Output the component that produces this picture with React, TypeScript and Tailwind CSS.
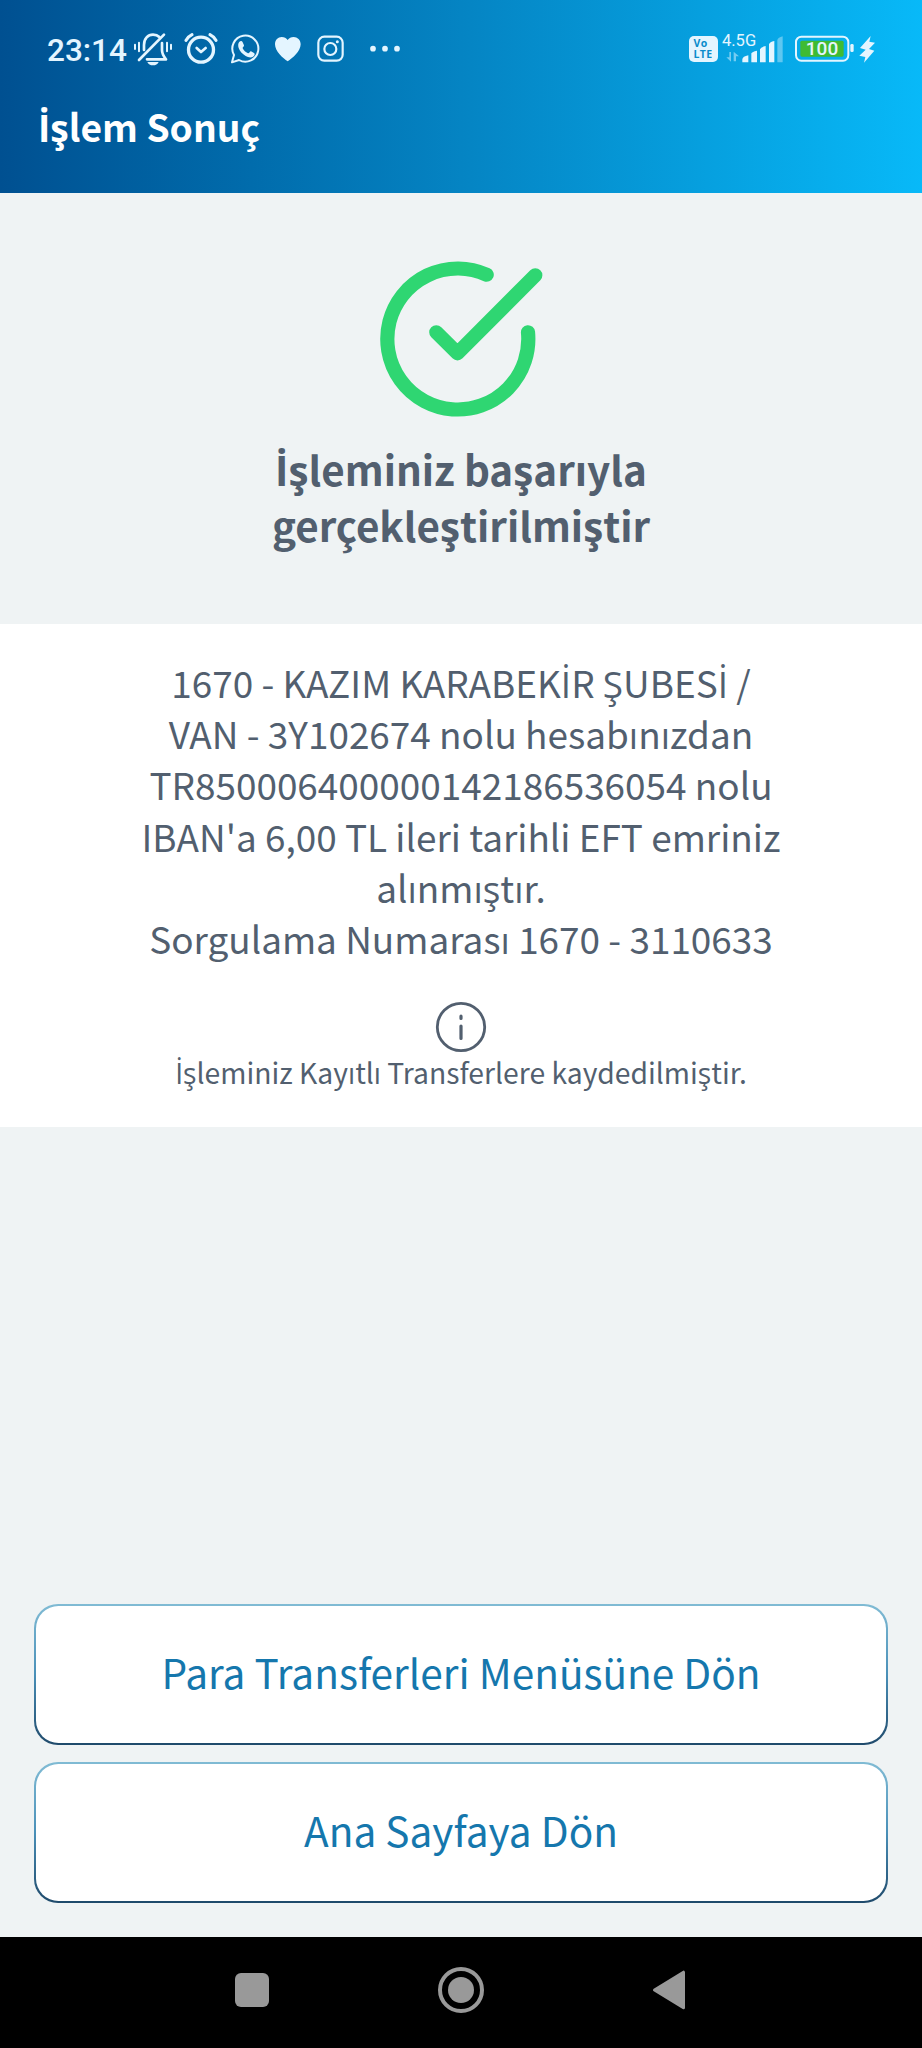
import type { ReactNode } from "react";

const INK = "#e4f5ff";

/** The main face has no dotted capital I, so that letter is set in Open Sans. */
function Tr({ children }: { children: string }) {
  const parts = children.split("İ");
  return (
    <>
      {parts.map((part, i) => (
        <span key={i}>
          {i > 0 && <span className="font-['Open_Sans'] leading-none">İ</span>}
          {part}
        </span>
      ))}
    </>
  );
}

function StatusIcon({ x, w, children }: { x: number; w: number; children: ReactNode }) {
  return (
    <svg
      className="shrink-0"
      width={w / 3}
      height={40}
      viewBox={`${x} 90 ${w} 120`}
      fill="none"
      stroke={INK}
      strokeLinecap="round"
      strokeLinejoin="round"
    >
      {children}
    </svg>
  );
}

function NotificationIcons() {
  return (
    <>
      <StatusIcon x={396} w={132}>
        <path strokeWidth="8" d="M492 104 417 180" />
        <path strokeWidth="8" d="M432 150v-15c0-19 12-31 27-31 8 0 14 2 19 7" />
        <path strokeWidth="8" d="M486 129v22c0 12 5 18 12 27h-57" />
        <path fill={INK} stroke="none" d="M442 186h34c-3 7-9 10-17 10s-14-3-17-10z" />
        <path strokeWidth="6" d="M405 134v13M417 128v26M501 128v26M513 134v13" />
      </StatusIcon>
      <StatusIcon x={528} w={156}>
        <circle cx="603" cy="149" r="37.500" strokeWidth="10" />
        <path strokeWidth="8" d="m590 144 13 12 14-12" />
        <path strokeWidth="9.500" d="M558 121c4-8 10-13 18-17M630 104c8 4 14 9 18 17" />
      </StatusIcon>
      <StatusIcon x={684} w={117}>
        <path strokeWidth="6" d="M696 187l6-22a39 39 0 1 1 15 15z" />
        <path
          fill={INK}
          stroke="none"
          d="M717 127c4-5 9-5 11 0l4 9c1 4-5 6-4 9 3 7 9 12 16 15 4 1 6-7 9-6l9 5c4 2 2 8-3 11-6 4-15 2-22-2-10-6-18-15-21-24-2-6-2-13 1-17z"
        />
      </StatusIcon>
      <StatusIcon x={801} w={126}>
        <path
          fill={INK}
          stroke="none"
          d="M863 184c-14-9-38-30-38-51 0-13 9-22 20-22 8 0 14 3 18 9 4-6 10-9 18-9 11 0 21 9 21 22 0 21-25 42-39 51z"
        />
      </StatusIcon>
      <StatusIcon x={927} w={129}>
        <rect x="955" y="110" width="73" height="72" rx="18" strokeWidth="6.500" />
        <circle cx="991" cy="147" r="18" strokeWidth="6.500" />
        <circle cx="1012" cy="125" r="4.500" fill={INK} stroke="none" />
      </StatusIcon>
      <StatusIcon x={1056} w={162}>
        <g fill={INK} stroke="none">
          <circle cx="1119" cy="146" r="8.500" />
          <circle cx="1155" cy="146" r="8.500" />
          <circle cx="1191" cy="146" r="8.500" />
        </g>
      </StatusIcon>
    </>
  );
}

function Signal() {
  return (
    <div className="relative ml-1 h-10 w-[66px]">
      <span className="absolute top-[2px] left-0 font-['Roboto'] text-[16.5px] leading-[18px] text-[#e4f5ff]">
        4.5G
      </span>
      <svg width="66" height="40" viewBox="156 60 198 120" fill={INK}>
        <g opacity="0.5">
          <path d="M178 126h5v29l-14-13h9zM191 154v-29l16 14h-9v15z" />
        </g>
        <path d="M217 157v-9q1-9 18-12v21zM244 157v-27q2-5 17-8v35zM270 157v-39q2-7 17-10v49zM297 157v-54q2-7 16-10v64z" />
        <path opacity="0.4" d="M322 157V90q2-7 16-11v78z" />
      </svg>
    </div>
  );
}

function Battery() {
  return (
    <div className="relative ml-[6px] h-10 w-[60px]">
      <svg width="60" height="40" viewBox="372 60 180 120" fill="none">
        <rect x="378" y="80" width="157" height="72" rx="16" stroke={INK} strokeWidth="6" />
        <rect x="391" y="92" width="130" height="48" rx="5" fill="#3fbb33" />
        <rect x="541" y="102" width="10" height="24" rx="4" fill={INK} />
      </svg>
      <span className="absolute top-[9px] left-0 w-[56px] text-center font-['Roboto'] text-[19px] leading-[20px] font-medium text-[#e4f5ff]">
        100
      </span>
    </div>
  );
}

function StatusBar() {
  return (
    <div className="flex h-10 items-start">
      <div className="w-[86px] shrink-0 pt-[3px] pl-px font-['Roboto'] text-[31.500px] leading-[35px] font-medium text-[#e4f5ff]">
        23:14
      </div>
      <NotificationIcons />
      <div className="mt-[6px] ml-[283px] h-[26px] w-[29px] shrink-0 rounded-[5px] bg-[#e4f5ff] pt-[2px] pl-[4.5px] font-['Open_Sans'] text-[10.500px] leading-[11px] font-bold tracking-[0.4px] text-[#0a8ccb]">
        Vo
        <br />
        LTE
      </div>
      <Signal />
      <Battery />
      <svg className="ml-[4px]" width="20" height="40" viewBox="564 60 60 120" fill={INK}>
        <path d="m602 78-32 36 17 5-19 18 18 4-4 17 31-36-16-5 18-19-17-3z" />
      </svg>
    </div>
  );
}

function Header() {
  return (
    <header className="h-[193px] bg-linear-to-r from-[#005091] via-[#0584c3] to-[#08b9f8] pt-[30px] pl-[46px]">
      <StatusBar />
      <h1 className="-ml-[8px] pt-[32px] text-[37.200px] leading-[48px] font-bold text-white">
        <Tr>İşlem Sonuç</Tr>
      </h1>
    </header>
  );
}

function ActionButton({ children }: { children: string }) {
  return (
    <div className="h-[141px] rounded-[24px] bg-linear-to-b from-[#80bbd4] via-[#4a90b8] to-[#1f4a6b] p-[2px]">
      <button className="flex h-full w-full items-center justify-center rounded-[22.500px] bg-white pb-[5px] text-[40.550px] leading-[58px] text-[#1577ad]">
        {children}
      </button>
    </div>
  );
}

const DETAILS = [
  "1670 - KAZIM KARABEKİR ŞUBESİ /",
  "VAN - 3Y102674 nolu hesabınızdan",
  "TR850006400000142186536054 nolu",
  "IBAN'a 6,00 TL ileri tarihli EFT emriniz",
  "alınmıştır.",
  "Sorgulama Numarası 1670 - 3110633",
];

export default function App() {
  return (
    <div className="flex h-[2048px] w-[922px] flex-col bg-[#eff3f4] font-['Noto_Sans_CJK_SC','Open_Sans',sans-serif] text-[#525f6f]">
      <Header />

      <section className="flex h-[431px] flex-col items-center pt-[62px]">
        <svg width="180" height="170" viewBox="371 255 180 170" fill="none" stroke="#2fd672" strokeWidth="14.200" strokeLinecap="round" strokeLinejoin="round">
          <path d="M486.700 274.700A70.500 70.500 0 1 0 528 332.300" />
          <path d="m436.300 332.300 21.200 21 77.800-78" />
        </svg>
        <h2 className="mt-[16px] text-center text-[40.400px] leading-[56px] font-bold">
          <div><Tr>İşleminiz başarıyla</Tr></div>
          <div>gerçekleştirilmiştir</div>
        </h2>
      </section>

      <section className="flex h-[503px] flex-col items-center bg-white pt-[33px] text-center">
        <div className="text-[36.920px] leading-[51.200px]">
          {DETAILS.map((line) => (
            <div key={line}><Tr>{line}</Tr></div>
          ))}
        </div>
        <svg className="mt-[37px]" width="52" height="52" viewBox="0 0 52 52" fill="none" stroke="#525f6f" strokeLinecap="round">
          <circle cx="26" cy="26" r="23.700" strokeWidth="2.800" />
          <path strokeWidth="3.200" d="M26 15.200v2.300M26 25v12.500" />
        </svg>
        <p className="-mt-px text-[28.300px] leading-[40px]"><Tr>İşleminiz Kayıtlı Transferlere kaydedilmiştir.</Tr></p>
      </section>

      <main className="flex flex-1 flex-col justify-end gap-[17px] px-[34px] pb-[34px]">
        <ActionButton>Para Transferleri Menüsüne Dön</ActionButton>
        <ActionButton>Ana Sayfaya Dön</ActionButton>
      </main>

      <nav className="flex h-[111px] items-center bg-black pb-[5px] pl-[235px]">
        <div className="h-[34px] w-[34px] rounded-[6px] bg-[#999]" />
        <div className="ml-[169px] flex h-[46px] w-[46px] items-center justify-center rounded-full border-4 border-[#999]">
          <div className="h-[26px] w-[26px] rounded-full bg-[#999]" />
        </div>
        <svg className="ml-[168px]" width="34" height="40" viewBox="0 0 34 40" fill="#999" stroke="#999" strokeWidth="3" strokeLinejoin="round">
          <path d="M2.500 20 31.500 2.200v35.600z" />
        </svg>
      </nav>
    </div>
  );
}
